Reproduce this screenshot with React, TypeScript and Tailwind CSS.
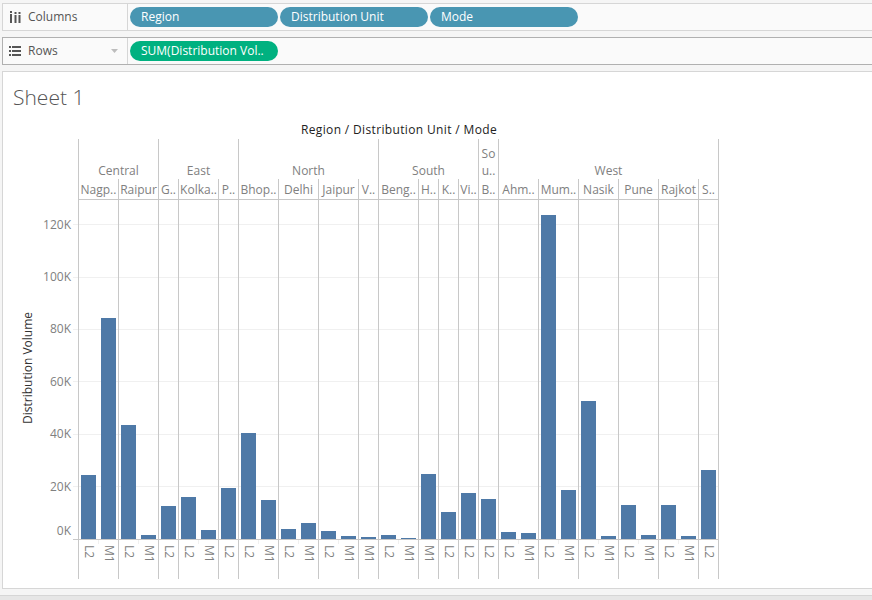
const regions = [
  { name: "Central", units: [
    { name: "Nagp..", bars: [["L2", 475], ["M1", 318]] },
    { name: "Raipur", bars: [["L2", 425], ["M1", 535]] },
  ] },
  { name: "East", units: [
    { name: "G..", bars: [["L2", 506]] },
    { name: "Kolka..", bars: [["L2", 497], ["M1", 530]] },
    { name: "P..", bars: [["L2", 488]] },
  ] },
  { name: "North", units: [
    { name: "Bhop..", bars: [["L2", 433], ["M1", 500]] },
    { name: "Delhi", bars: [["L2", 529], ["M1", 523]] },
    { name: "Jaipur", bars: [["L2", 531], ["M1", 536]] },
    { name: "V..", bars: [["M1", 537]] },
  ] },
  { name: "South", units: [
    { name: "Beng..", bars: [["L2", 535], ["M1", 538]] },
    { name: "H..", bars: [["M1", 474]] },
    { name: "K..", bars: [["L2", 512]] },
    { name: "Vi..", bars: [["L2", 493]] },
  ] },
  { name: "So\nu..", units: [
    { name: "B..", bars: [["L2", 499]] },
  ] },
  { name: "West", units: [
    { name: "Ahm..", bars: [["L2", 532], ["M1", 533]] },
    { name: "Mum..", bars: [["L2", 215], ["M1", 490]] },
    { name: "Nasik", bars: [["L2", 401], ["M1", 536]] },
    { name: "Pune", bars: [["L2", 505], ["M1", 535]] },
    { name: "Rajkot", bars: [["L2", 505], ["M1", 536]] },
    { name: "S..", bars: [["L2", 470]] },
  ] },
] as { name: string; units: { name: string; bars: [string, number][] }[] }[];

const ticks = ["120K", "100K", "80K", "60K", "40K", "20K"];
const font = "font-['Open_Sans','Liberation_Sans',sans-serif]";

function Pill({ label, green }: { label: string; green?: boolean }) {
  return (
    <div className={`flex h-5 w-[148px] items-center rounded-full pl-[11px] text-xs text-white ${green ? "bg-[#00b180]" : "bg-[#4996b2]"}`}>
      {label}
    </div>
  );
}

function Shelf({ label, icon, dark, arrow, children }: { label: string; icon: React.ReactNode; dark?: boolean; arrow?: boolean; children: React.ReactNode }) {
  return (
    <div className={`ml-[2px] flex h-7 border-y border-l bg-[#fafafa] ${dark ? "border-[#b0b0b0]" : "border-[#d6d6d6]"}`}>
      <div className="flex w-[125px] items-center border-r border-[#d6d6d6] pl-[6px] text-xs text-[#555555]">
        <div className="flex w-[19px] items-center">{icon}</div>
        <span>{label}</span>
        {arrow && (
          <svg width="7" height="4" viewBox="0 0 7 4" className="ml-[53px]">
            <path d="M0 0H7L3.5 4Z" fill="#bdbdbd" />
          </svg>
        )}
      </div>
      <div className="flex items-center gap-[2px] pl-[2px]">{children}</div>
    </div>
  );
}

function ColumnsIcon() {
  return (
    <svg width="11" height="12" viewBox="0 0 11 12" fill="#555555" className="ml-[1px]">
      <rect x="0" y="0" width="2" height="2" />
      <rect x="0" y="3" width="2" height="9" />
      <rect x="4.5" y="1" width="2" height="2" />
      <rect x="4.5" y="4" width="2" height="8" />
      <rect x="8.5" y="1" width="2" height="2" />
      <rect x="8.5" y="4" width="2" height="8" />
    </svg>
  );
}

function RowsIcon() {
  return (
    <svg width="13" height="11" viewBox="0 0 13 11" fill="#555555">
      <rect x="0" y="0" width="2" height="2" />
      <rect x="3" y="0" width="9" height="2" />
      <rect x="0" y="4" width="2" height="2" />
      <rect x="3" y="4" width="9" height="2" />
      <rect x="0" y="8" width="2" height="2" />
      <rect x="3" y="8" width="9" height="2" />
    </svg>
  );
}

function YAxis() {
  return (
    <div className="flex h-full w-[75px] shrink-0 pt-[59px]">
      <div className="flex h-[339px] w-[69px] shrink-0">
        <div className="flex w-[32px] shrink-0 items-center justify-end">
          <span className="rotate-180 whitespace-nowrap text-xs leading-[14px] text-[#333333] [writing-mode:vertical-rl]">Distribution Volume</span>
        </div>
        <div className="flex w-[37px] shrink-0 flex-col text-xs text-[#808080]">
          {ticks.map((t) => (
            <div key={t} className="relative flex h-[52.4px] shrink-0 items-center justify-end pr-[1px]">
              <span className="relative top-[0.5px]">{t}</span>
              <div className="absolute left-full top-1/2 ml-[1px] h-px w-[646px] bg-[#f0f0f0]" />
            </div>
          ))}
          <div className="relative flex h-[52.4px] shrink-0 items-center justify-end pr-[1px]">
            <span className="relative -top-[8px]">0K</span>
            <div className="absolute left-full top-1/2 ml-[1px] h-px w-[6px] bg-[#c8c8c8]" />
          </div>
        </div>
      </div>
    </div>
  );
}

function Chart() {
  return (
    <div className="relative z-10 flex w-[641px] shrink-0 border-r border-[#c8c8c8] text-xs text-[#808080]">
      {regions.map((r) => (
        <div key={r.name} className="flex flex-col" style={{ width: r.units.reduce((s, u) => s + u.bars.length, 0) * 20 }}>
          <div className="flex h-10 flex-col items-center justify-end whitespace-pre border-l border-[#c8c8c8] text-center leading-[17px]">
            {r.name}
          </div>
          <div className="flex">
            {r.units.map((u) => (
              <div key={u.name} className="flex flex-col border-l border-[#c8c8c8]" style={{ width: u.bars.length * 20 }}>
                <div className="flex h-[21px] items-center justify-center whitespace-nowrap border-b border-[#c8c8c8] pt-[1px]">
                  {u.name}
                </div>
                <div className="flex h-[339px] items-end pl-[2px]">
                  {u.bars.map(([m, top], i) => (
                    <div key={i} className={`w-[15px] bg-[#4e79a7] ${i > 0 ? "ml-[5px]" : ""}`} style={{ height: 539 - top }} />
                  ))}
                </div>
                <div className="flex h-10 border-t border-[#c8c8c8] pt-[5px]">
                  {u.bars.map(([m], i) => (
                    <div key={i} className="relative flex w-5 shrink-0 justify-center">
                      {i > 0 && <div className="absolute -left-[1px] -top-[5px] h-[4px] w-px bg-[#f0f0f0]" />}
                      <span className="leading-[18px] [writing-mode:vertical-rl]">{m}</span>
                    </div>
                  ))}
                </div>
              </div>
            ))}
          </div>
        </div>
      ))}
    </div>
  );
}

export default function App() {
  return (
    <div className={`flex h-[600px] w-[872px] flex-col overflow-hidden bg-[#f5f5f5] pt-[3px] ${font}`}>
      <Shelf label="Columns" icon={<ColumnsIcon />}>
        <Pill label="Region" />
        <Pill label="Distribution Unit" />
        <Pill label="Mode" />
      </Shelf>
      <div className="mt-[6px]">
        <Shelf label="Rows" icon={<RowsIcon />} dark arrow>
          <Pill label="SUM(Distribution Vol.." green />
        </Shelf>
      </div>
      <div className="ml-[2px] mt-[6px] flex h-[518px] shrink-0 flex-col border-y border-l border-[#d6d6d6] bg-white">
        <div className="h-[49px] shrink-0 pl-[10px] pt-[12px] text-[21px] font-light leading-[26px] text-[#555555]">Sheet 1</div>
        <div className="flex h-[18px] w-[717px] shrink-0 items-center justify-center pl-[75px] text-xs font-medium tracking-[0.35px] text-[#222222]">
          Region / Distribution Unit / Mode
        </div>
        <div className="flex">
          <YAxis />
          <Chart />
        </div>
      </div>
      <div className="mt-[6px] flex-1 border-t border-[#d6d6d6] bg-[#e6e6e6]" />
    </div>
  );
}
